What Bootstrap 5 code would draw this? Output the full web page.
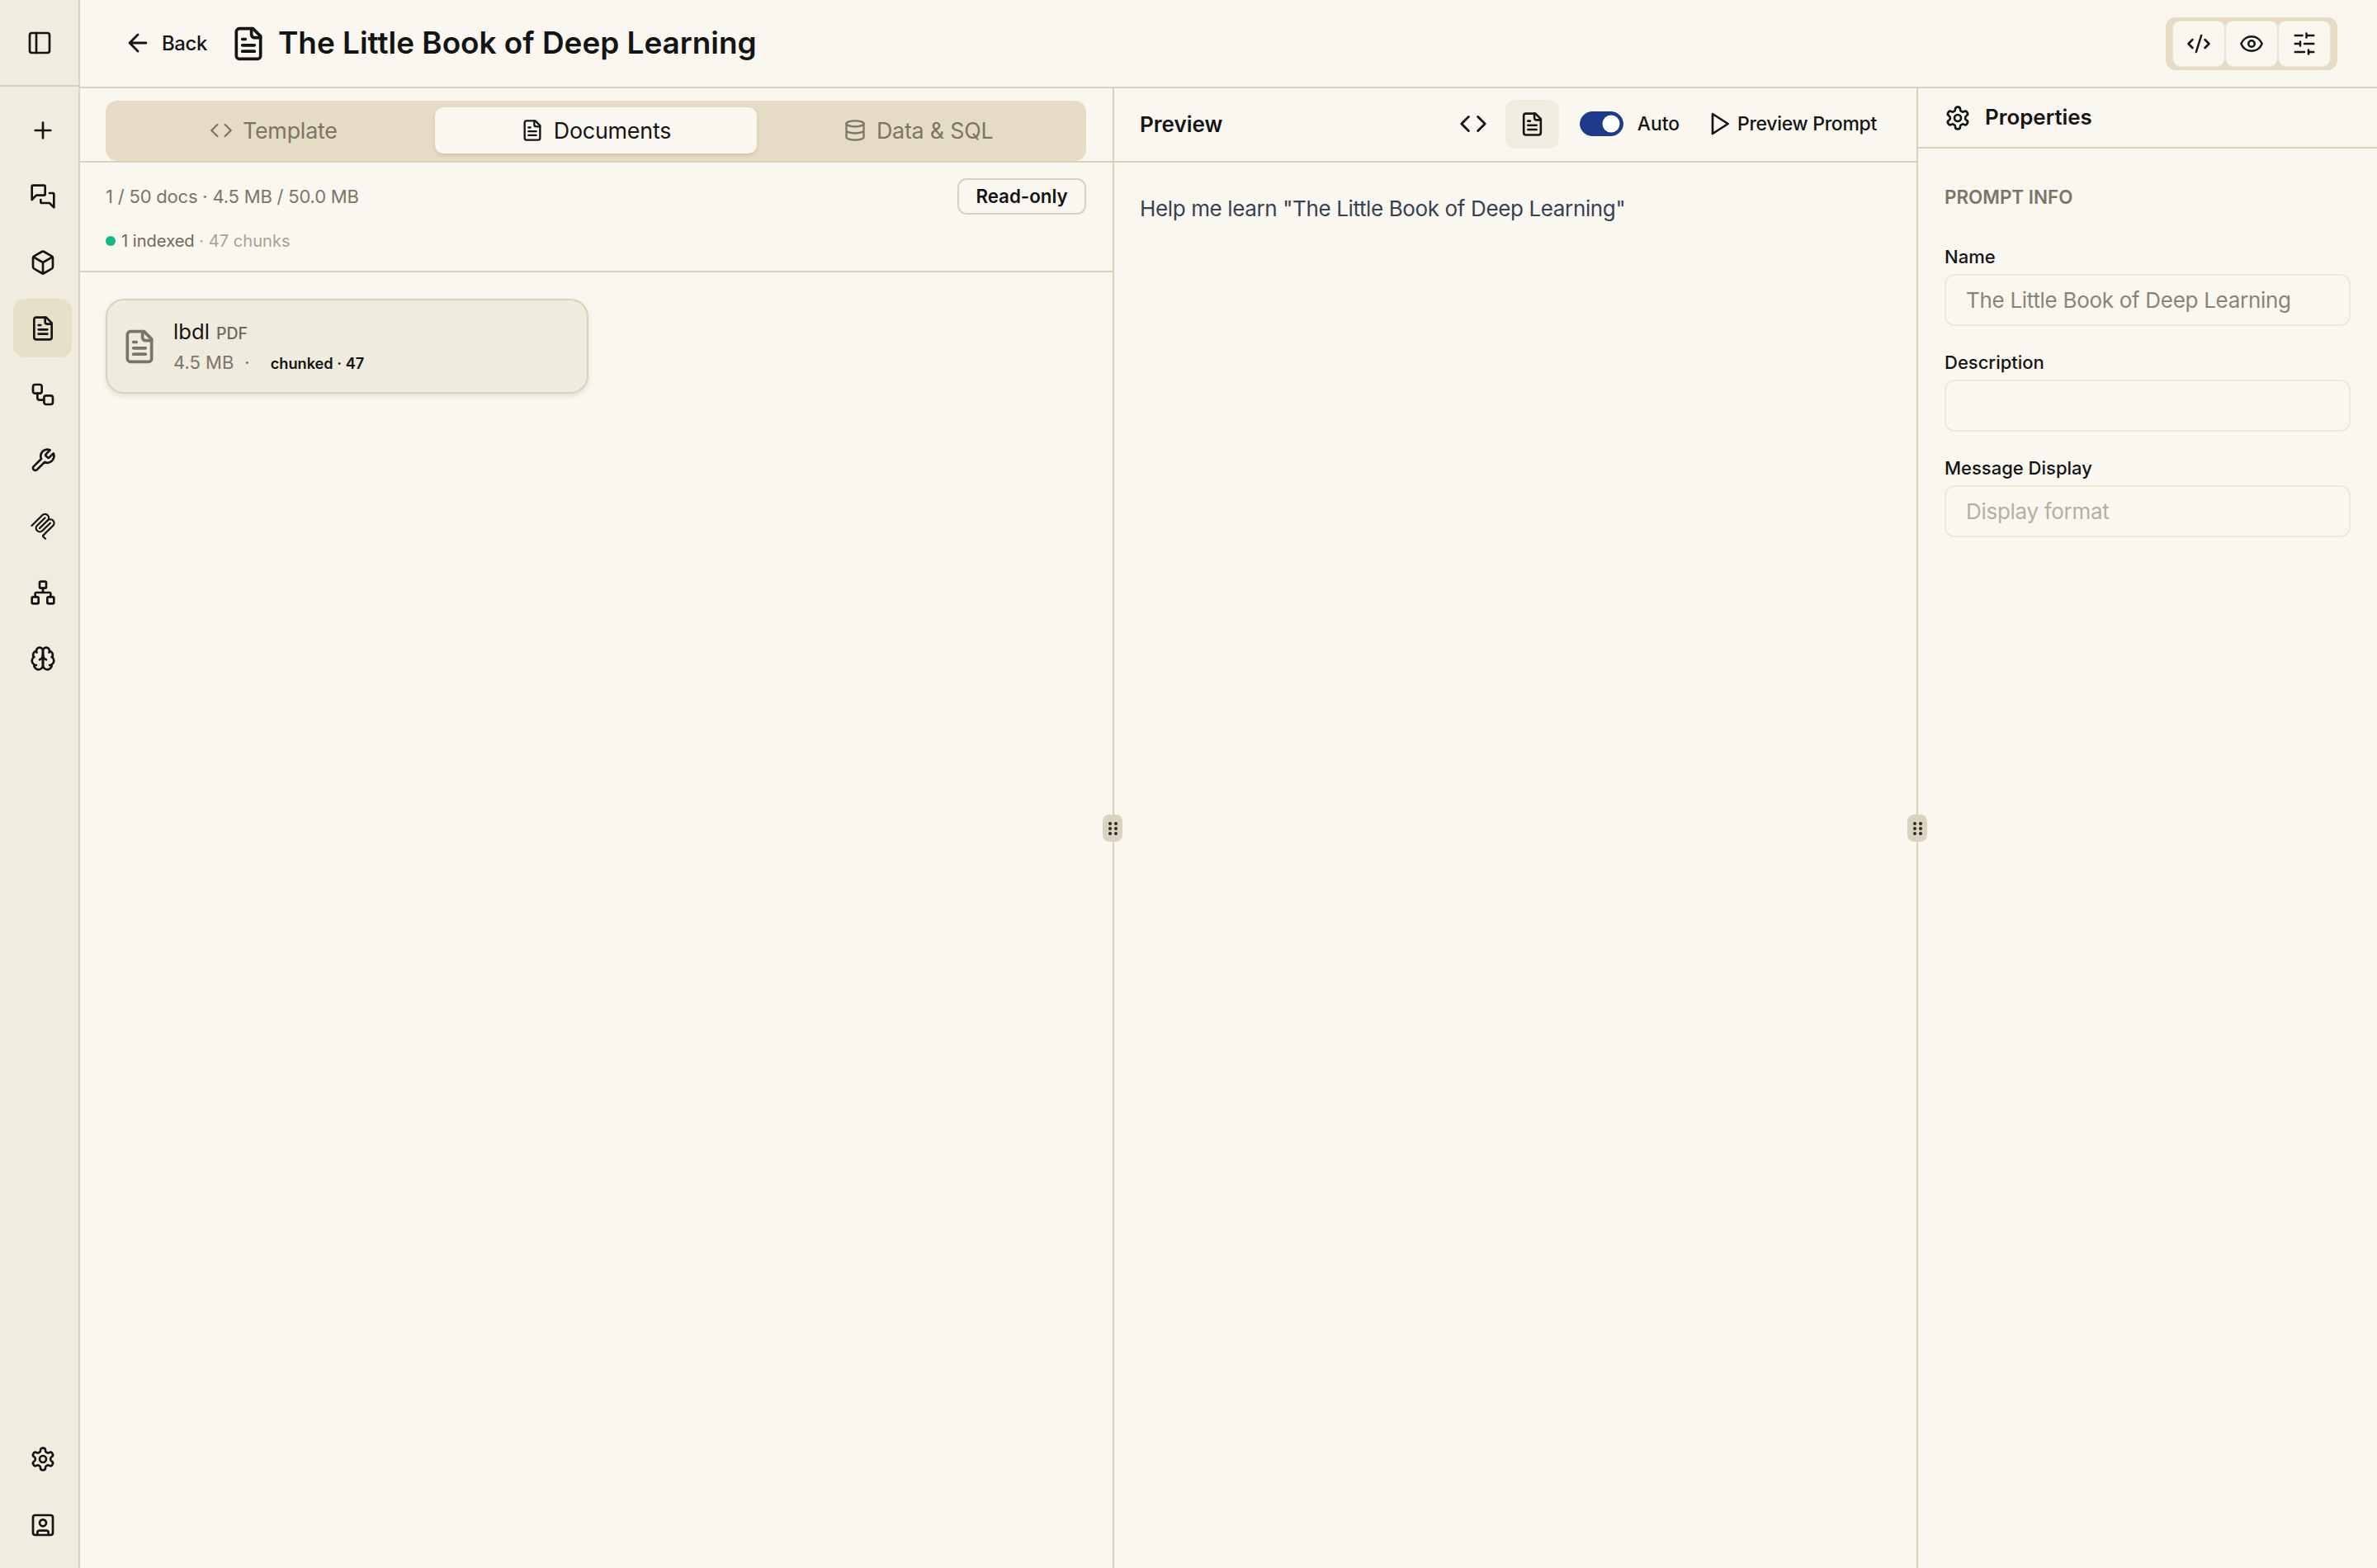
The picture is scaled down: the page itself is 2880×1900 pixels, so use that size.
<!DOCTYPE html>
<html lang="en">
<head>
<meta charset="UTF-8">
<title>Prompt Documents</title>
<link href="https://cdn.jsdelivr.net/npm/bootstrap@5.3.0/dist/css/bootstrap.min.css" rel="stylesheet">
<style>
body { background: #faf7f0; color: #141414; font-family: Inter, "Liberation Sans", sans-serif; }
svg.ic { fill: none; stroke: currentColor; stroke-width: 2; stroke-linecap: round; stroke-linejoin: round; flex: none; }
.app-shell { height: 100vh; }
.rail { width: 97px; background: #f0ecdf; border-right: 2px solid #dbd2ba; }
.rail-top { height: 105px; padding-left: 32px; border-bottom: 2px solid #dbd2ba; flex: none; }
.rail-list { padding: 17px 0 0 8px; gap: 9px; }
.rail-foot { padding: 0 0 17px 8px; gap: 9px; }
.rail-item { width: 71px; height: 71px; border-radius: 14px; color: #141414; }
.rail-item.active { background: #e8dfc9; }
.rail-item svg { width: 32px; height: 32px; }
.top-bar { height: 105px; flex: none; padding-left: 53px; padding-right: 48px; }
.back-link { font-size: 23.9px; letter-spacing: -0.35px; font-weight: 500; color: #141414; gap: 12px; }
.title-icon { margin-left: 28px; }
.page-title { font-size: 36.9px; font-weight: 600; margin: 0 0 0 14px; }
.view-group { background: #e6dcc5; border-radius: 12px; padding: 4px 8px; }
.view-btn { width: 64px; height: 56px; border-radius: 10px; background: #faf7f0; border: 1px solid #efe9d9; padding: 0; color: #141414; }
.view-btn svg { width: 30px; height: 30px; }
.col-docs { width: 1253px; border-right: 2px solid #dbd2ba; }
.col-preview { width: 974px; border-right: 2px solid #dbd2ba; }
.col-props { flex: 1; }
.line-top { border-top: 2px solid #dbd2ba; }
.tab-head { padding: 15px 32px 0 31px; height: 90px; border-bottom: 2px solid #dbd2ba; }
.tab-strip { background: #e6dcc5; border-radius: 14px; padding: 8px; height: 73px; }
.tab-item { height: 56px; border-radius: 10px; font-size: 26.8px; letter-spacing: -0.2px; color: #7b7568; gap: 12px; }
.tab-item svg { width: 28px; height: 28px; }
.tab-item.active { background: #faf7f0; color: #141414; box-shadow: 0 2px 4px rgba(90,75,40,.16); }
.stats-box { height: 133px; border-bottom: 2px solid #dbd2ba; padding: 19px 32px 0 31px; }
.stat-one { font-size: 22px; letter-spacing: -0.2px; color: #7b7568; }
.stat-two { font-size: 20.1px; line-height: 30px; color: #a8a294; margin-top: 17px; gap: 7px; }
.stat-two b { font-weight: 400; color: #6d675c; }
.dot-ok { width: 12px; height: 12px; border-radius: 50%; background: #10b981; }
.readonly-tag { height: 44px; width: 156px; justify-content: center; border: 2px solid #d8d2bd; border-radius: 11px; font-size: 22.3px; font-weight: 600; background: #faf7f0; }
.doc-card { width: 585px; height: 115px; margin: 32px 0 0 31px; border-radius: 22px; background: #efebdf; border: 2px solid #d8d2b8; box-shadow: 0 3px 6px rgba(90,75,40,.14); padding-left: 17px; gap: 19px; }
.doc-card > svg { width: 44px; height: 44px; color: #7b7568; }
.doc-name { font-size: 25.7px; line-height: 34px; padding-top: 2px; }
.doc-kind { font-size: 19.5px; font-weight: 500; color: #6d675c; margin-left: 8px; }
.doc-meta { font-size: 22px; color: #7b7568; line-height: 32px; margin-top: 2px; }
.meta-dot { margin-left: 13px; }
.doc-chunks { font-size: 18.2px; font-weight: 600; color: #141414; margin-left: 25px; }
.preview-head { height: 90px; padding: 0 48px 2px 31px; border-bottom: 2px solid #dbd2ba; }
.preview-title { font-size: 26px; font-weight: 600; }
.mode-btn { width: 65px; height: 59px; border-radius: 12px; color: #141414; }
.mode-btn svg { width: 34px; height: 34px; }
.mode-btn.active { background: #f0ecdf; margin-left: 6px; }
.mode-btn.active svg { width: 31px; height: 31px; }
.auto-switch { margin: 0 0 0 25px; padding: 0; min-height: 0; }
.auto-switch .form-check-input { display: block; width: 53px; height: 30px; margin: 0; background-color: #1e3a8a; border-color: #1e3a8a; }
.auto-label { font-size: 22.8px; font-weight: 500; margin-left: 17px; }
.preview-run { font-size: 23px; letter-spacing: -0.3px; font-weight: 500; margin-left: 32px; gap: 6px; }
.preview-run svg { width: 32px; height: 32px; }
.preview-body { padding: 36px 31px; font-size: 26px; letter-spacing: -0.37px; color: #374151; }
.props-head { height: 73px; padding-left: 32px; border-bottom: 2px solid #dbd2ba; font-size: 25.9px; font-weight: 600; gap: 17px; }
.props-head svg { width: 32px; height: 32px; }
.props-body { padding: 45px 32px 0; }
.group-label { font-size: 22.4px; font-weight: 600; color: #7b7568; margin-bottom: 43px; line-height: 28px; }
.field-label { font-size: 22px; font-weight: 500; line-height: 30px; margin-bottom: 6px; }
.field-box { height: 63px; border: 2px solid #eee8d9; border-radius: 12px; background: #faf7f0; font-size: 26px; letter-spacing: -0.3px; padding: 0 24px; margin-bottom: 29px; color: #8a8478; }
.field-box:read-only { background: #faf7f0; }
.field-box::placeholder { color: #b4afa3; }
.drag-handle { position: absolute; top: 880px; width: 24px; height: 33px; border-radius: 8px; background: #d9d3bf; display: grid; grid-template-columns: 4px 4px; gap: 2px 3px; place-content: center; }
.drag-handle i { width: 4px; height: 4px; border-radius: 50%; background: #2b2a25; }
.handle-one { left: 1239px; }
.handle-two { left: 2214px; }
</style>
</head>
<body>
<svg width="0" height="0" class="position-absolute">
  <symbol id="i-panel" viewBox="0 0 24 24"><rect x="3" y="3" width="18" height="18" rx="2"/><path d="M9 3v18"/></symbol>
  <symbol id="i-plus" viewBox="0 0 24 24"><path d="M5 12h14M12 5v14"/></symbol>
  <symbol id="i-chat" viewBox="0 0 24 24"><path d="M14 10a1 1 0 0 1-1 1H6l-4 4V3a1 1 0 0 1 1-1h10a1 1 0 0 1 1 1z"/><path d="M18 9h3a1 1 0 0 1 1 1v12l-4-4h-7a1 1 0 0 1-1-1v-2"/></symbol>
  <symbol id="i-box" viewBox="0 0 24 24"><path d="M21 8a2 2 0 0 0-1-1.73l-7-4a2 2 0 0 0-2 0l-7 4A2 2 0 0 0 3 8v8a2 2 0 0 0 1 1.73l7 4a2 2 0 0 0 2 0l7-4A2 2 0 0 0 21 16Z"/><path d="m3.3 7 8.7 5 8.7-5M12 22V12"/></symbol>
  <symbol id="i-file" viewBox="0 0 24 24"><path d="M15 2H6a2 2 0 0 0-2 2v16a2 2 0 0 0 2 2h12a2 2 0 0 0 2-2V7Z"/><path d="M14 2v4a2 2 0 0 0 2 2h4M10 9H8M16 13H8M16 17H8"/></symbol>
  <symbol id="i-flow" viewBox="0 0 24 24"><rect x="3" y="3" width="8" height="8" rx="2"/><path d="M7 11v4a2 2 0 0 0 2 2h4"/><rect x="13" y="13" width="8" height="8" rx="2"/></symbol>
  <symbol id="i-wrench" viewBox="0 0 24 24"><path d="M14.7 6.3a1 1 0 0 0 0 1.4l1.6 1.6a1 1 0 0 0 1.4 0l3.77-3.77a6 6 0 0 1-7.94 7.94l-6.91 6.91a2.12 2.12 0 0 1-3-3l6.91-6.91a6 6 0 0 1 7.94-7.94l-3.76 3.76z"/></symbol>
  <symbol id="i-mcp" viewBox="0 0 24 24"><path fill="currentColor" stroke="none" d="M15.688 2.343a2.588 2.588 0 00-3.61 0l-9.626 9.44a.863.863 0 01-1.203 0 .823.823 0 010-1.18l9.626-9.44a4.313 4.313 0 016.016 0 4.116 4.116 0 011.204 3.54 4.3 4.3 0 013.609 1.18l.05.05a4.115 4.115 0 010 5.9l-8.706 8.537a.274.274 0 000 .393l1.788 1.754a.823.823 0 010 1.18.863.863 0 01-1.203 0l-1.788-1.753a1.92 1.92 0 010-2.754l8.706-8.538a2.47 2.47 0 000-3.54l-.05-.049a2.588 2.588 0 00-3.607-.003l-7.172 7.034-.098.097a.863.863 0 01-1.204 0 .823.823 0 010-1.18l7.273-7.133a2.47 2.47 0 00-.003-3.537z"/><path fill="currentColor" stroke="none" d="M14.485 4.703a.823.823 0 000-1.18.863.863 0 00-1.204 0l-7.119 6.982a4.115 4.115 0 000 5.9 4.314 4.314 0 006.016 0l7.12-6.982a.823.823 0 000-1.18.863.863 0 00-1.204 0l-7.119 6.982a2.588 2.588 0 01-3.61 0 2.47 2.47 0 010-3.54l7.12-6.982z"/></symbol>
  <symbol id="i-net" viewBox="0 0 24 24"><rect x="16" y="16" width="6" height="6" rx="1"/><rect x="2" y="16" width="6" height="6" rx="1"/><rect x="9" y="2" width="6" height="6" rx="1"/><path d="M5 16v-3a1 1 0 0 1 1-1h12a1 1 0 0 1 1 1v3M12 12V8"/></symbol>
  <symbol id="i-brain" viewBox="0 0 24 24"><path d="M12 5a3 3 0 1 0-5.997.125 4 4 0 0 0-2.526 5.77 4 4 0 0 0 .556 6.588A4 4 0 1 0 12 18Z"/><path d="M12 5a3 3 0 1 1 5.997.125 4 4 0 0 1 2.526 5.77 4 4 0 0 1-.556 6.588A4 4 0 1 1 12 18Z"/><path d="M15 13a4.5 4.5 0 0 1-3-4 4.5 4.5 0 0 1-3 4M17.599 6.5a3 3 0 0 0 .399-1.375M6.003 5.125A3 3 0 0 0 6.401 6.5M3.477 10.896a4 4 0 0 1 .585-.396M19.938 10.5a4 4 0 0 1 .585.396M6 18a4 4 0 0 1-1.967-.516M19.967 17.484A4 4 0 0 1 18 18"/></symbol>
  <symbol id="i-gear" viewBox="0 0 24 24"><path d="M12.22 2h-.44a2 2 0 0 0-2 2v.18a2 2 0 0 1-1 1.73l-.43.25a2 2 0 0 1-2 0l-.15-.08a2 2 0 0 0-2.73.73l-.22.38a2 2 0 0 0 .73 2.73l.15.1a2 2 0 0 1 1 1.72v.51a2 2 0 0 1-1 1.74l-.15.09a2 2 0 0 0-.73 2.73l.22.38a2 2 0 0 0 2.73.73l.15-.08a2 2 0 0 1 2 0l.43.25a2 2 0 0 1 1 1.73V20a2 2 0 0 0 2 2h.44a2 2 0 0 0 2-2v-.18a2 2 0 0 1 1-1.73l.43-.25a2 2 0 0 1 2 0l.15.08a2 2 0 0 0 2.73-.73l.22-.39a2 2 0 0 0-.73-2.73l-.15-.08a2 2 0 0 1-1-1.74v-.5a2 2 0 0 1 1-1.74l.15-.09a2 2 0 0 0 .73-2.73l-.22-.38a2 2 0 0 0-2.73-.73l-.15.08a2 2 0 0 1-2 0l-.43-.25a2 2 0 0 1-1-1.73V4a2 2 0 0 0-2-2z"/><circle cx="12" cy="12" r="3"/></symbol>
  <symbol id="i-user" viewBox="0 0 24 24"><rect x="3" y="3" width="18" height="18" rx="2"/><circle cx="12" cy="10" r="3"/><path d="M7 21v-2a2 2 0 0 1 2-2h6a2 2 0 0 1 2 2v2"/></symbol>
  <symbol id="i-back" viewBox="0 0 24 24"><path d="m12 19-7-7 7-7M19 12H5"/></symbol>
  <symbol id="i-code" viewBox="0 0 24 24"><path d="m16 18 6-6-6-6M8 6l-6 6 6 6"/></symbol>
  <symbol id="i-xml" viewBox="0 0 24 24"><path d="m18 16 4-4-4-4M6 8l-4 4 4 4M14.5 4l-5 16"/></symbol>
  <symbol id="i-eye" viewBox="0 0 24 24"><path d="M2.062 12.348a1 1 0 0 1 0-.696 10.75 10.75 0 0 1 19.876 0 1 1 0 0 1 0 .696 10.75 10.75 0 0 1-19.876 0"/><circle cx="12" cy="12" r="3"/></symbol>
  <symbol id="i-sliders" viewBox="0 0 24 24"><path d="M21 4h-7M10 4H3M21 12h-9M8 12H3M21 20h-5M12 20H3M14 2v4M8 10v4M16 18v4"/></symbol>
  <symbol id="i-db" viewBox="0 0 24 24"><ellipse cx="12" cy="5" rx="9" ry="3"/><path d="M3 5V19A9 3 0 0 0 21 19V5M3 12A9 3 0 0 0 21 12"/></symbol>
  <symbol id="i-play" viewBox="0 0 24 24"><path d="M6 3l14 9-14 9z"/></symbol>
</svg>

<div class="app-shell d-flex">
  <nav class="rail d-flex flex-column flex-shrink-0">
    <div class="rail-top d-flex align-items-center"><svg class="ic" width="32" height="32"><use href="#i-panel"/></svg></div>
    <div class="d-flex flex-column align-items-center flex-grow-1 rail-list" id="railList"></div>
    <div class="d-flex flex-column align-items-center rail-foot" id="railFoot"></div>
  </nav>

  <div class="d-flex flex-column flex-grow-1 min-w-0">
    <header class="top-bar d-flex align-items-center">
      <a href="#" class="back-link d-flex align-items-center text-decoration-none">
        <svg class="ic" width="34" height="34"><use href="#i-back"/></svg><span>Back</span>
      </a>
      <svg class="ic title-icon" width="44" height="44"><use href="#i-file"/></svg>
      <h1 class="page-title">The Little Book of Deep Learning</h1>
      <div class="view-group d-flex ms-auto">
        <button class="view-btn btn d-flex align-items-center justify-content-center"><svg class="ic"><use href="#i-xml"/></svg></button>
        <button class="view-btn btn d-flex align-items-center justify-content-center"><svg class="ic"><use href="#i-eye"/></svg></button>
        <button class="view-btn btn d-flex align-items-center justify-content-center"><svg class="ic"><use href="#i-sliders"/></svg></button>
      </div>
    </header>

    <main class="d-flex flex-grow-1 line-top position-relative">
      <section class="col-docs d-flex flex-column flex-shrink-0">
        <div class="tab-head flex-shrink-0">
          <div class="tab-strip d-flex">
            <div class="tab-item flex-fill d-flex align-items-center justify-content-center w-100"><svg class="ic"><use href="#i-code"/></svg><span>Template</span></div>
            <div class="tab-item active flex-fill d-flex align-items-center justify-content-center w-100"><svg class="ic"><use href="#i-file"/></svg><span>Documents</span></div>
            <div class="tab-item flex-fill d-flex align-items-center justify-content-center w-100"><svg class="ic"><use href="#i-db"/></svg><span>Data &amp; SQL</span></div>
          </div>
        </div>
        <div class="stats-box d-flex flex-column flex-shrink-0">
          <div class="d-flex align-items-center justify-content-between">
            <span class="stat-one">1 / 50 docs · 4.5 MB / 50.0 MB</span>
            <span class="readonly-tag d-flex align-items-center"><span>Read-only</span></span>
          </div>
          <div class="stat-two d-flex align-items-center"><span class="dot-ok"></span><span><b>1 indexed</b> · 47 chunks</span></div>
        </div>
        <div class="doc-card d-flex align-items-center">
          <svg class="ic"><use href="#i-file"/></svg>
          <div>
            <div class="doc-name"><span>lbdl</span><span class="doc-kind">PDF</span></div>
            <div class="doc-meta"><span>4.5 MB</span><span class="meta-dot">·</span><span class="doc-chunks">chunked · 47</span></div>
          </div>
        </div>
      </section>

      <section class="col-preview d-flex flex-column flex-shrink-0">
        <div class="preview-head d-flex align-items-center flex-shrink-0">
          <span class="preview-title me-auto">Preview</span>
          <span class="mode-btn d-flex align-items-center justify-content-center"><svg class="ic"><use href="#i-code"/></svg></span>
          <span class="mode-btn active d-flex align-items-center justify-content-center"><svg class="ic"><use href="#i-file"/></svg></span>
          <div class="form-check form-switch auto-switch"><input class="form-check-input" type="checkbox" checked role="switch"></div>
          <span class="auto-label">Auto</span>
          <span class="preview-run d-flex align-items-center"><svg class="ic"><use href="#i-play"/></svg><span>Preview Prompt</span></span>
        </div>
        <div class="preview-body">Help me learn "The Little Book of Deep Learning"</div>
      </section>

      <aside class="col-props d-flex flex-column">
        <div class="props-head d-flex align-items-center flex-shrink-0"><svg class="ic"><use href="#i-gear"/></svg><span>Properties</span></div>
        <div class="props-body">
          <div class="group-label">PROMPT INFO</div>
          <label class="field-label d-block">Name</label>
          <input class="form-control field-box" readonly value="The Little Book of Deep Learning">
          <label class="field-label d-block">Description</label>
          <input class="form-control field-box" readonly>
          <label class="field-label d-block">Message Display</label>
          <input class="form-control field-box" placeholder="Display format">
        </div>
      </aside>

      <div class="drag-handle handle-one"><i></i><i></i><i></i><i></i><i></i><i></i></div>
      <div class="drag-handle handle-two"><i></i><i></i><i></i><i></i><i></i><i></i></div>
    </main>
  </div>
</div>

<script>
const railList = document.getElementById('railList');
const railFoot = document.getElementById('railFoot');

function addRailItem(parent, name, active) {
  const el = document.createElement('a');
  el.href = '#';
  el.className = 'rail-item d-flex align-items-center justify-content-center' + (active ? ' active' : '');
  el.innerHTML = `<svg class="ic"><use href="#i-${name}"/></svg>`;
  parent.appendChild(el);
}

['plus', 'chat', 'box', 'file', 'flow', 'wrench', 'mcp', 'net', 'brain'].forEach(name => addRailItem(railList, name, name === 'file'));
['gear', 'user'].forEach(name => addRailItem(railFoot, name, false));
</script>
<script src="https://cdn.jsdelivr.net/npm/bootstrap@5.3.0/dist/js/bootstrap.bundle.min.js"></script>
</body>
</html>
